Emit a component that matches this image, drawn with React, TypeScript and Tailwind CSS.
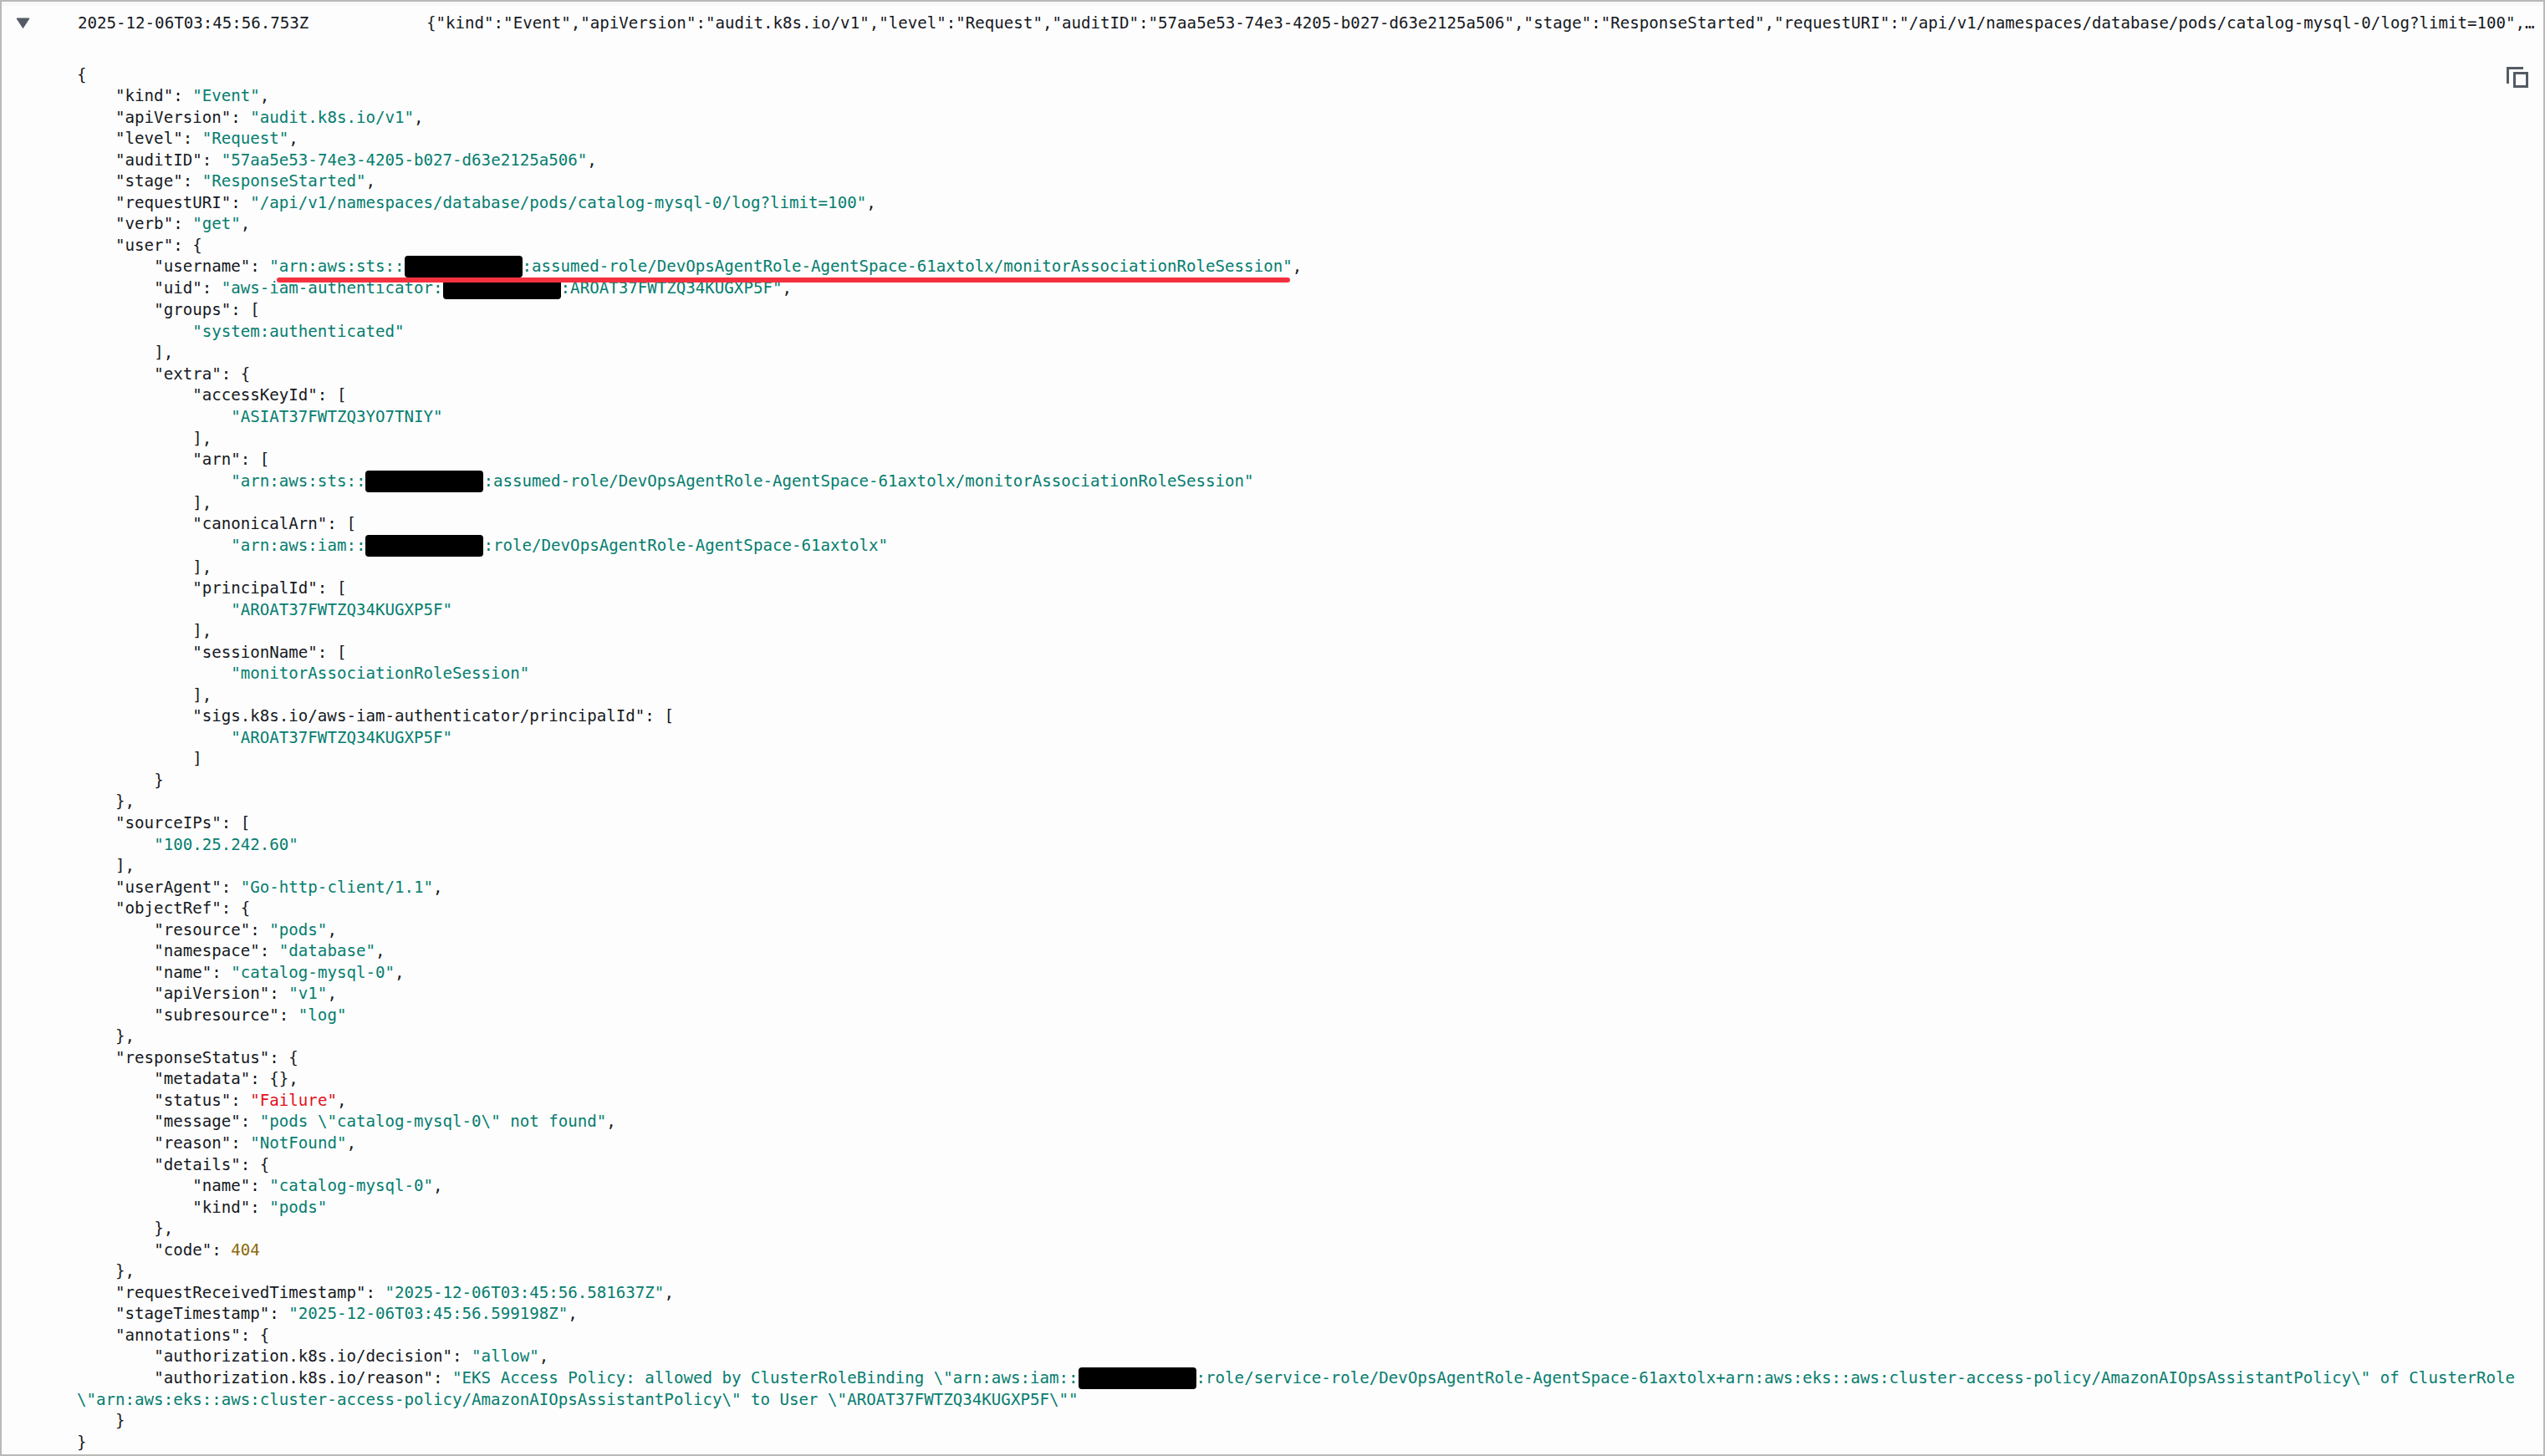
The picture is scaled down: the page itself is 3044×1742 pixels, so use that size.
const message =
  '{"kind":"Event","apiVersion":"audit.k8s.io/v1","level":"Request","auditID":"57aa5e53-74e3-4205-b027-d63e2125a506","stage":"ResponseStarted","requestURI":"/api/v1/namespaces/database/pods/catalog-mysql-0/log?limit=100","verb":"get","user":{"username":"arn:aws:sts"}}'

// @@ marks a redacted account id
const lines = [
  '{',
  '    "kind": "Event",',
  '    "apiVersion": "audit.k8s.io/v1",',
  '    "level": "Request",',
  '    "auditID": "57aa5e53-74e3-4205-b027-d63e2125a506",',
  '    "stage": "ResponseStarted",',
  '    "requestURI": "/api/v1/namespaces/database/pods/catalog-mysql-0/log?limit=100",',
  '    "verb": "get",',
  '    "user": {',
  '        "username": "arn:aws:sts::@@:assumed-role/DevOpsAgentRole-AgentSpace-61axtolx/monitorAssociationRoleSession",',
  '        "uid": "aws-iam-authenticator:@@:AROAT37FWTZQ34KUGXP5F",',
  '        "groups": [',
  '            "system:authenticated"',
  '        ],',
  '        "extra": {',
  '            "accessKeyId": [',
  '                "ASIAT37FWTZQ3YO7TNIY"',
  '            ],',
  '            "arn": [',
  '                "arn:aws:sts::@@:assumed-role/DevOpsAgentRole-AgentSpace-61axtolx/monitorAssociationRoleSession"',
  '            ],',
  '            "canonicalArn": [',
  '                "arn:aws:iam::@@:role/DevOpsAgentRole-AgentSpace-61axtolx"',
  '            ],',
  '            "principalId": [',
  '                "AROAT37FWTZQ34KUGXP5F"',
  '            ],',
  '            "sessionName": [',
  '                "monitorAssociationRoleSession"',
  '            ],',
  '            "sigs.k8s.io/aws-iam-authenticator/principalId": [',
  '                "AROAT37FWTZQ34KUGXP5F"',
  '            ]',
  '        }',
  '    },',
  '    "sourceIPs": [',
  '        "100.25.242.60"',
  '    ],',
  '    "userAgent": "Go-http-client/1.1",',
  '    "objectRef": {',
  '        "resource": "pods",',
  '        "namespace": "database",',
  '        "name": "catalog-mysql-0",',
  '        "apiVersion": "v1",',
  '        "subresource": "log"',
  '    },',
  '    "responseStatus": {',
  '        "metadata": {},',
  '        "status": "Failure",',
  '        "message": "pods \\"catalog-mysql-0\\" not found",',
  '        "reason": "NotFound",',
  '        "details": {',
  '            "name": "catalog-mysql-0",',
  '            "kind": "pods"',
  '        },',
  '        "code": 404',
  '    },',
  '    "requestReceivedTimestamp": "2025-12-06T03:45:56.581637Z",',
  '    "stageTimestamp": "2025-12-06T03:45:56.599198Z",',
  '    "annotations": {',
  '        "authorization.k8s.io/decision": "allow",',
  '        "authorization.k8s.io/reason": "EKS Access Policy: allowed by ClusterRoleBinding \\"arn:aws:iam::@@:role/service-role/DevOpsAgentRole-AgentSpace-61axtolx+arn:aws:eks::aws:cluster-access-policy/AmazonAIOpsAssistantPolicy\\" of ClusterRole \\"arn:aws:eks::aws:cluster-access-policy/AmazonAIOpsAssistantPolicy\\" to User \\"AROAT37FWTZQ34KUGXP5F\\""',
  '    }',
  '}',
]

function Redacted() {
  return <span className="inline-block w-[12.25ch] h-[26px] align-top bg-black rounded-[4px]" />
}

function StringValue({ text }: { text: string }) {
  const parts = text.split('@@')
  const color = text === '"Failure"' ? 'text-[#e3111b]' : 'text-[#067d6f]'
  return (
    <span className={color}>
      {parts.map((part, i) => (
        <span key={i}>
          {i > 0 && <Redacted />}
          {part}
        </span>
      ))}
    </span>
  )
}

function JsonLine({ line }: { line: string }) {
  const match = line.match(/^(\s*)("[^"]+":\s)?(.*)$/)
  const indent = match?.[1] ?? ''
  const key = match?.[2] ?? ''
  const rest = match?.[3] ?? ''
  const value = rest.match(/^("(?:[^"\\]|\\.)*")(,?)$/)
  const num = rest.match(/^(\d+)(,?)$/)

  return (
    <div>
      {indent}
      {key}
      {value ? (
        <>
          <StringValue text={value[1]} />
          {value[2]}
        </>
      ) : num ? (
        <>
          <span className="text-[#8a6a0a]">{num[1]}</span>
          {num[2]}
        </>
      ) : (
        rest
      )}
    </div>
  )
}

export default function App() {
  return (
    <div className="relative w-[3044px] h-[1742px] overflow-hidden bg-[#fdfdfd] border-2 border-[#b9b9b9] font-['DejaVu_Sans_Mono',monospace] text-[19.145px] leading-[25.53px] text-[#16191f]">
      <div className="h-[5px] bg-[#f8f8f9]" />

      <div className="flex items-center pt-[8px] pl-[17px] pr-[6px]">
        <svg width="17" height="13" viewBox="0 0 17 13" className="shrink-0">
          <path d="M1 1h15L8.5 12.5z" fill="#545b64" stroke="#545b64" strokeLinejoin="round" />
        </svg>
        <span className="ml-[57px] w-[417px] shrink-0">2025-12-06T03:45:56.753Z</span>
        <span className="flex-1 truncate">{message}</span>
      </div>

      <div className="pt-[36px] pl-[90px] pr-[4px] whitespace-pre-wrap break-words">
        {lines.map((line, i) => (
          <JsonLine key={i} line={line} />
        ))}
      </div>

      {/* red annotation under the username */}
      <div className="absolute left-[329px] top-[330px] w-[1212px] h-[6px] rounded-full bg-[#f5313f]" />

      <svg
        width="26"
        height="25"
        viewBox="0 0 26 25"
        fill="none"
        stroke="#545b64"
        strokeWidth="3"
        className="absolute left-[2996px] top-[78px]"
      >
        <path d="M20 1.5H1.5V20" />
        <rect x="9.5" y="7.5" width="15" height="16" />
      </svg>
    </div>
  )
}
